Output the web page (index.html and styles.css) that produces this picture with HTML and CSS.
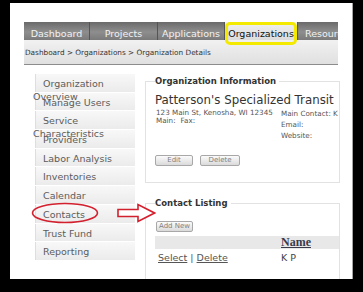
FILE: index.html
```html
<!DOCTYPE html>
<html lang="en">
<head>
  <meta charset="UTF-8">
  <title>Organization Details</title>
  <link rel="stylesheet" href="styles.css">
</head>
<body>
  <div class="frame">
    <div class="page">
      <!-- Top tabs -->
      <div class="tabs">
        <div class="tab tab-dash">Dashboard</div>
        <div class="tab tab-proj">Projects</div>
        <div class="tab tab-apps">Applications</div>
        <div class="tab tab-org selected">Organizations</div>
        <div class="tab tab-res">Resources</div>
      </div>
      <div class="crumbs">Dashboard &gt; Organizations &gt; Organization Details</div>

      <div class="content">
        <!-- Side menu -->
        <ul class="side">
          <li><a>Organization Overview</a></li>
          <li><a>Manage Users</a></li>
          <li><a>Service Characteristics</a></li>
          <li><a>Providers</a></li>
          <li><a>Labor Analysis</a></li>
          <li><a>Inventories</a></li>
          <li><a>Calendar</a></li>
          <li class="marked">
            <a>Contacts</a>
            <svg class="ring" width="68" height="22" viewBox="0 0 68 22">
              <ellipse cx="34" cy="11" rx="32.5" ry="9.5" fill="none" stroke="#d3202e" stroke-width="1.6"/>
            </svg>
          </li>
          <li><a>Trust Fund</a></li>
          <li><a>Reporting</a></li>
        </ul>

        <div class="main">
          <fieldset class="box info">
            <legend>Organization Information</legend>
            <h2 class="org-name">Patterson's Specialized Transit</h2>
            <div class="org-details">
              <div class="col-left">
                <div>123 Main St, Kenosha, WI 12345</div>
                <div><span class="lbl">Main:</span>Fax:</div>
              </div>
              <div class="col-right">
                <div>Main Contact: K P</div>
                <div>Email:</div>
                <div>Website:</div>
              </div>
            </div>
            <div class="actions">
              <button class="btn btn-edit">Edit</button>
              <button class="btn btn-delete">Delete</button>
            </div>
          </fieldset>

          <fieldset class="box listing">
            <legend>Contact Listing</legend>
            <div class="add-row">
              <svg class="pointer" width="40" height="20" viewBox="0 0 40 20">
                <polygon points="2,6.5 22,6.5 22,1.5 38.5,10 22,18.5 22,13.5 2,13.5" fill="#fff" stroke="#d3202e" stroke-width="1.6" stroke-linejoin="miter"/>
              </svg>
              <button class="btn btn-add">Add New</button>
            </div>
            <table class="contacts">
              <tr>
                <th></th>
                <th class="th-name">Name</th>
              </tr>
              <tr>
                <td class="td-links"><a>Select</a> | <a>Delete</a></td>
                <td>K P</td>
              </tr>
            </table>
          </fieldset>
        </div>
      </div>
    </div>
  </div>
</body>
</html>
```

FILE: styles.css
```css
/* Base */
body {
  margin: 0;
  background: #000;
  font-family: "DejaVu Sans", Verdana, sans-serif;
}
.frame {
  width: 342px;
  height: 276px;
  margin: 3px 0 0 10px;
  background: #fff;
  border-right: 1px solid #a5a5a5;
  overflow: hidden;
}
.page {
  width: 316px;
  margin: 19px 0 0 14px;
}

/* Tabs */
.tabs {
  display: flex;
  width: 314px;
  height: 18px;
  background: linear-gradient(#6a6a6a, #8e8e8e 55%, #7a7a7a);
  white-space: nowrap;
}
.tab {
  flex: none;
  box-sizing: border-box;
  height: 18px;
  padding-top: 6px;
  font-size: 9.5px;
  line-height: 12px;
  text-align: center;
  color: #f2f2f2;
  border-right: 1px solid #555;
}
.tab-dash { width: 66px; }
.tab-proj { width: 68px; }
.tab-apps { width: 67px; }
.tab-org { width: 73px; }
.tab-res {
  width: 38px;
  margin-left: 2px;
  padding-left: 5px;
  text-align: left;
  overflow: hidden;
  border-right: none;
}
.tab.selected {
  position: relative;
  background: linear-gradient(#f0f0f0, #dcdcdc);
  color: #111;
}
.tab.selected::after {
  content: "";
  position: absolute;
  left: 0;
  right: 0;
  top: 0;
  bottom: -5px;
  border: 3px solid #f3ea00;
  border-radius: 5px;
}

/* Breadcrumb */
.crumbs {
  width: 313px;
  height: 24px;
  padding-left: 1px;
  line-height: 25px;
  font-size: 7.3px;
  color: #333;
  background: linear-gradient(#f1f1f1, #e0e0e0);
  border-bottom: 1px solid #8c8c8c;
}

/* Layout */
.content {
  display: flex;
  align-items: flex-start;
  padding-top: 9px;
}

/* Side menu */
.side {
  flex: none;
  width: 100px;
  margin: 0 0 0 11px;
  padding: 0;
  list-style: none;
}
.side li {
  box-sizing: border-box;
  height: 18.7px;
  padding-top: 3px;
  font-size: 9.5px;
  line-height: 13px;
  text-indent: 10px;
  color: #5c5c5c;
  background: linear-gradient(#f8f8f8, #ebebeb);
  border-bottom: 1px solid #fff;
  box-shadow: inset 1px 0 #dedede;
}
.side a {
  display: block;
  margin-left: -2px;
}
.side li.marked {
  position: relative;
}
.ring {
  position: absolute;
  left: -4px;
  top: -3px;
}

/* Main area */
.main {
  flex: 1;
  min-width: 0;
  margin-left: 10px;
}
.box {
  margin: 1px 0 0;
  padding: 0 0 16px 9px;
  border: 1px solid #e2e2e2;
  min-width: 0;
}
.box legend {
  padding: 0 3px 0 0;
  font-size: 8.5px;
  font-weight: bold;
  line-height: 12px;
  color: #333;
}
.org-name {
  margin: 6px 0 0;
  font-size: 11.8px;
  font-weight: normal;
  line-height: 14px;
  color: #333;
  white-space: nowrap;
}
.org-details {
  display: flex;
  align-items: flex-start;
  margin-top: 2px;
  font-size: 7.2px;
  color: #555;
  white-space: nowrap;
}
.col-left {
  flex: none;
  width: 125px;
  padding-left: 1px;
  line-height: 8px;
}
.col-left .lbl {
  margin-right: 5px;
}
.col-right {
  flex: 1;
  min-width: 0;
  margin-top: -1.5px;
  line-height: 11px;
  overflow: hidden;
}
.actions {
  display: flex;
  gap: 7px;
  margin-top: 14.5px;
}
.btn {
  box-sizing: border-box;
  height: 11px;
  padding: 0;
  font-family: inherit;
  font-size: 7px;
  line-height: 9px;
  color: #808080;
  background: linear-gradient(#fbfbfb, #dadada);
  border: 1px solid #a8a8a8;
  border-radius: 2px;
}
.btn-edit { width: 38px; }
.btn-delete { width: 40px; }

/* Contact listing */
.listing {
  margin-top: 14px;
}
.add-row {
  position: relative;
  margin-top: 4px;
  padding-left: 1px;
  height: 11px;
}
.btn-add {
  width: 37px;
}
.pointer {
  position: absolute;
  left: -39px;
  top: -10px;
}
.contacts {
  width: 100%;
  margin-top: 12px;
  border-collapse: collapse;
  font-size: 9.5px;
  color: #444;
}
.contacts th {
  height: 13px;
  padding: 0;
  text-align: left;
  background: #e8e8e8;
}
.contacts .th-name {
  font-family: "Liberation Serif", "Times New Roman", serif;
  font-size: 12px;
  line-height: 13px;
  color: #3a3a4a;
  text-decoration: underline;
}
.contacts td {
  padding: 2px 0;
  line-height: 14px;
}
.contacts .td-links {
  width: 123px;
  padding-left: 3px;
  color: #555;
}
.td-links a {
  text-decoration: underline;
}
```
